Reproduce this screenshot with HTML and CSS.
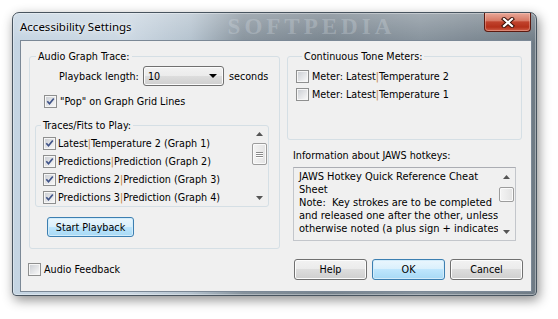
FILE: index.html
```html
<!DOCTYPE html>
<html lang="en">
  <head>
    <meta charset="UTF-8" />
    <title>Accessibility Settings</title>
    <link rel="stylesheet" href="styles.css">
  </head>
  <body>
    <div class="window">
      <!-- glass title bar -->
      <div class="titlebar">
        <span class="title">Accessibility Settings</span>
        <span class="watermark">SOFTPEDIA</span>
        <div class="close">
          <svg width="14" height="11" viewBox="0 0 14 11">
            <path d="M3 2 L11 9 M11 2 L3 9" stroke="#3a1008" stroke-width="4.2" stroke-linecap="square" fill="none"/>
            <path d="M3 2 L11 9 M11 2 L3 9" stroke="#fff" stroke-width="2.2" stroke-linecap="square" fill="none"/>
          </svg>
        </div>
      </div>

      <div class="client">
        <div class="top">
          <fieldset class="group trace">
            <legend>Audio Graph Trace:</legend>
            <div class="length-row">
              <span class="length-label">Playback length:</span>
              <div class="combo">
                <span>10</span>
                <svg width="8" height="4" viewBox="0 0 8 4"><path d="M0 0 H8 L4 4 Z" fill="#000"/></svg>
              </div>
              <span class="secs">seconds</span>
            </div>
            <label class="check pop">
              <span class="box"><svg width="9" height="9" viewBox="0 0 9 9"><path d="M1.3 4.3 L3.5 6.8 L7.8 1.5" stroke="#3f5388" stroke-width="1.7" fill="none"/></svg></span>
              <span>"Pop" on Graph Grid Lines</span>
            </label>

            <fieldset class="group traces">
              <legend>Traces/Fits to Play:</legend>
              <div class="listwrap">
                <ul class="list">
                  <li><span class="box"><svg width="9" height="9" viewBox="0 0 9 9"><path d="M1.3 4.3 L3.5 6.8 L7.8 1.5" stroke="#3f5388" stroke-width="1.7" fill="none"/></svg></span><span>Latest<span class="pipe">|</span>Temperature 2 (Graph 1)</span></li>
                  <li><span class="box"><svg width="9" height="9" viewBox="0 0 9 9"><path d="M1.3 4.3 L3.5 6.8 L7.8 1.5" stroke="#3f5388" stroke-width="1.7" fill="none"/></svg></span><span>Predictions<span class="pipe">|</span>Prediction (Graph 2)</span></li>
                  <li><span class="box"><svg width="9" height="9" viewBox="0 0 9 9"><path d="M1.3 4.3 L3.5 6.8 L7.8 1.5" stroke="#3f5388" stroke-width="1.7" fill="none"/></svg></span><span>Predictions 2<span class="pipe">|</span>Prediction (Graph 3)</span></li>
                  <li><span class="box"><svg width="9" height="9" viewBox="0 0 9 9"><path d="M1.3 4.3 L3.5 6.8 L7.8 1.5" stroke="#3f5388" stroke-width="1.7" fill="none"/></svg></span><span>Predictions 3<span class="pipe">|</span>Prediction (Graph 4)</span></li>
                </ul>
                <div class="scrollbar list-sb">
                  <div class="sb-arrow"><svg width="7" height="4" viewBox="0 0 7 4"><path d="M3.5 0 L7 4 H0 Z" fill="#555"/></svg></div>
                  <div class="sb-track"><div class="sb-thumb"><i></i><i></i><i></i></div></div>
                  <div class="sb-arrow"><svg width="7" height="4" viewBox="0 0 7 4"><path d="M0 0 H7 L3.5 4 Z" fill="#555"/></svg></div>
                </div>
              </div>
            </fieldset>

            <button class="btn default start">Start Playback</button>
          </fieldset>

          <div class="right">
            <fieldset class="group meters">
              <legend>Continuous Tone Meters:</legend>
              <label class="check"><span class="box"></span><span>Meter: Latest<span class="pipe">|</span>Temperature 2</span></label>
              <label class="check"><span class="box"></span><span>Meter: Latest<span class="pipe">|</span>Temperature 1</span></label>
            </fieldset>

            <div class="info">Information about JAWS hotkeys:</div>
            <div class="memo">
              <div class="memo-text">JAWS Hotkey Quick Reference Cheat
Sheet
Note:  Key strokes are to be completed
and released one after the other, unless
otherwise noted (a plus sign + indicates</div>
              <div class="scrollbar memo-sb">
                <div class="sb-arrow"><svg width="7" height="4" viewBox="0 0 7 4"><path d="M3.5 0 L7 4 H0 Z" fill="#555"/></svg></div>
                <div class="sb-track"><div class="sb-thumb"></div></div>
                <div class="sb-arrow"><svg width="7" height="4" viewBox="0 0 7 4"><path d="M0 0 H7 L3.5 4 Z" fill="#555"/></svg></div>
              </div>
            </div>
          </div>
        </div>

        <div class="bottom">
          <label class="check feedback"><span class="box"></span><span>Audio Feedback</span></label>
          <div class="buttons">
            <button class="btn">Help</button>
            <button class="btn default">OK</button>
            <button class="btn">Cancel</button>
          </div>
        </div>
      </div>
    </div>
  </body>
</html>
```

FILE: styles.css
```css
* {
  box-sizing: border-box;
}
body {
  margin: 0;
  width: 558px;
  height: 319px;
  overflow: hidden;
  background: #fff;
  font-family: "DejaVu Sans Condensed", "Liberation Sans", sans-serif;
  font-size: 10.7px;
  line-height: 13px;
  color: #000;
}

/* window frame */
.window {
  margin: 12px 0 0 12px;
  width: 525px;
  height: 284px;
  padding: 0 4px 3px 7px;
  border: 1px solid #48545f;
  border-radius: 7px 7px 4px 4px;
  background:
    linear-gradient(rgba(255, 255, 255, 0.25), rgba(255, 255, 255, 0) 30px),
    linear-gradient(90deg, #c4d4e2 0%, #cbd7e2 22%, #b4c2ce 34%, #86929c 44%, #77838d 60%, #85919b 78%, #6f7b85 100%);
  box-shadow: inset 0 0 0 1px rgba(255, 255, 255, 0.35), 2px 4px 12px rgba(0, 0, 0, 0.45);
  display: flex;
  flex-direction: column;
}
.titlebar {
  height: 27px;
  display: flex;
  align-items: center;
}
.title {
  font-family: "Noto Sans", "Open Sans", sans-serif;
  font-size: 11.5px;
  color: #000;
  text-shadow: 0 0 6px rgba(255, 255, 255, 0.9), 0 0 2px rgba(255, 255, 255, 0.8);
}
.watermark {
  margin-left: 96px;
  font-family: "Liberation Serif", serif;
  font-weight: bold;
  font-size: 23px;
  letter-spacing: 4px;
  line-height: 24px;
  color: rgba(215, 222, 228, 0.3);
}
.close {
  margin-left: auto;
  margin-right: 1px;
  align-self: flex-start;
  width: 47px;
  height: 19px;
  border: 1px solid #5c1a10;
  border-top: none;
  border-radius: 0 0 4px 4px;
  background: linear-gradient(#e9a899 0%, #d77a66 42%, #c0422c 50%, #b4301a 78%, #cf5f48 100%);
  box-shadow: inset 0 0 0 1px rgba(255, 220, 210, 0.35);
  display: flex;
  align-items: center;
  justify-content: center;
}

/* dialog body */
.client {
  height: 252px;
  border: 1px solid #7b8896;
  background: #f0f0f0;
  padding: 9px 0 0 8px;
}
.top {
  display: flex;
  gap: 7px;
  align-items: flex-start;
}
.group {
  margin: 0;
  padding: 0;
  min-width: 0;
  border: 1px solid #d5dfe5;
  border-radius: 3px;
}
.group legend {
  margin-left: 6px;
  padding: 0 2px;
  line-height: 13px;
}
.trace {
  width: 251px;
  padding-bottom: 11px;
}
.length-row {
  display: flex;
  align-items: center;
  height: 20px;
  margin: 3px 0 0 29px;
}
.length-label {
  width: 84px;
}
.combo {
  width: 81px;
  height: 20px;
  padding: 0 6px 0 4px;
  border: 1px solid #707070;
  border-radius: 3px;
  background: linear-gradient(#f2f2f2, #ebebeb 50%, #dddddd 50%, #cfcfcf);
  box-shadow: inset 0 0 0 1px #fbfbfb;
  display: flex;
  align-items: center;
  justify-content: space-between;
}
.secs {
  margin-left: 5px;
}

/* checkboxes */
.check {
  display: flex;
  align-items: center;
  gap: 3px;
}
.box {
  flex: none;
  width: 13px;
  height: 13px;
  padding: 1px;
  border: 1px solid #8e8f8f;
  background: linear-gradient(135deg, #cdd0d5, #f7f7f7) content-box, #f6f6f6;
  display: flex;
}
.pipe {
  color: #c2823a;
}
.pop {
  height: 13px;
  margin: 9px 0 0 14px;
}

.traces {
  width: 234px;
  margin: 11px 0 0 5px;
}
.traces legend {
  margin-left: 5px;
}
.listwrap {
  display: flex;
  height: 74px;
}
.list {
  flex: 1;
  margin: 0;
  padding: 2px 0 0 7px;
  list-style: none;
}
.list li {
  height: 18px;
  display: flex;
  align-items: center;
  gap: 2px;
}

/* scrollbars */
.scrollbar {
  width: 17px;
  display: flex;
  flex-direction: column;
}
.list-sb {
  margin-top: -7px;
}
.sb-arrow {
  height: 17px;
  display: flex;
  align-items: center;
  justify-content: center;
}
.sb-track {
  flex: 1;
  padding: 0 1px;
}
.sb-thumb {
  border: 1px solid #9c9c9c;
  border-radius: 2px;
  background: linear-gradient(90deg, #f4f4f4, #e3e3e3);
  box-shadow: inset 0 0 0 1px #fafafa;
  display: flex;
  flex-direction: column;
  align-items: center;
  justify-content: center;
  gap: 1px;
}
.list-sb .sb-thumb {
  margin-top: 1px;
  height: 22px;
}
.memo-sb .sb-thumb {
  margin-top: 2px;
  height: 15px;
}
.sb-thumb i {
  width: 7px;
  height: 1px;
  background: #8a8a8a;
  box-shadow: 0 1px 0 #fff;
}

.btn {
  width: 73px;
  height: 21px;
  padding: 0;
  font: inherit;
  color: #000;
  border: 1px solid #707070;
  border-radius: 3px;
  background: linear-gradient(#f2f2f2, #ebebeb 50%, #dddddd 50%, #cfcfcf);
  box-shadow: inset 0 0 0 1px #fcfcfc;
}
.btn.default {
  border-color: #3c7fb1;
  background: linear-gradient(#eaf6fd, #d9f0fc 50%, #bee6fd 50%, #a7d9f5);
  box-shadow: inset 0 0 0 1px #d3ecfa;
}
.start {
  display: block;
  width: 87px;
  height: 20px;
  margin: 10px 0 0 17px;
}

/* right column */
.right {
  width: 235px;
}
.meters {
  padding: 4px 0 36px 8px;
}
.meters .check {
  height: 18px;
}
.info {
  margin: 9px 0 0 6px;
}
.memo {
  width: 223px;
  height: 74px;
  margin: 5px 0 0 6px;
  border: 1px solid #c3c6cb;
  border-top-color: #abadb3;
  display: flex;
}
.memo-text {
  flex: 1;
  padding: 2px 0 0 5px;
  font-size: 11px;
  line-height: 13px;
  white-space: pre;
  overflow: hidden;
}

.bottom {
  display: flex;
  align-items: center;
  margin: 10px 0 0 -1px;
}
.buttons {
  margin-left: auto;
  margin-right: 8px;
  display: flex;
  gap: 5px;
}
```
